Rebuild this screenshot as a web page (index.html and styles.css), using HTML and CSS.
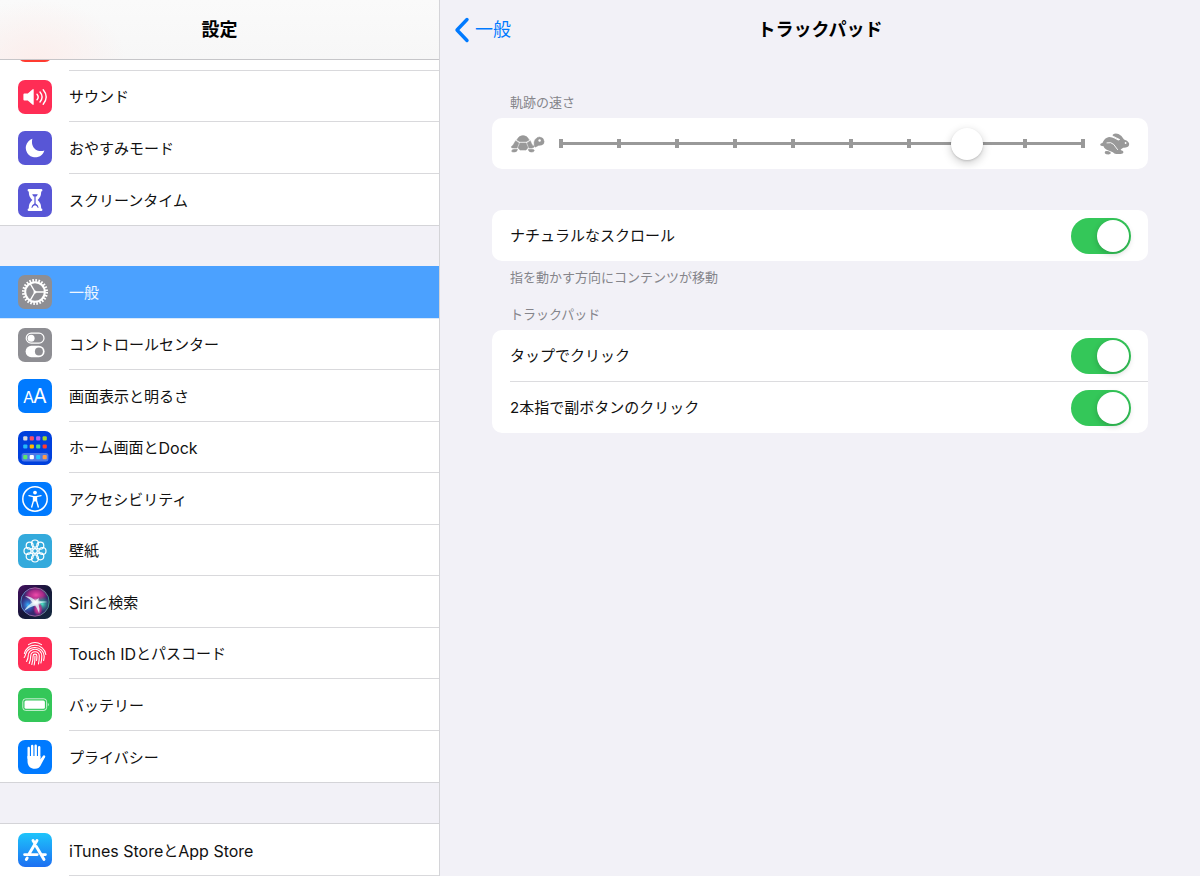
FILE: index.html
```html
<!DOCTYPE html>
<html lang="ja">
<head>
<meta charset="utf-8">
<meta name="viewport" content="width=device-width, initial-scale=1">
<title>設定</title>
<link rel="stylesheet" href="styles.css">
</head>
<body>
<div class="app">
  <aside class="sidebar">
    <header class="bar bar-sidebar"><h1 class="title">設定</h1></header>
    <nav class="menu">
      <ul class="group group-first">
        <li class="row row-peek" aria-hidden="true">
          <svg class="icon" viewBox="0 0 34 34"><rect width="34" height="34" rx="7" fill="#ff3b30"/></svg>
          <span class="row-body"></span>
        </li>
        <li><a class="row" href="#sound">
          <svg class="icon" viewBox="0 0 34 34"><rect width="34" height="34" rx="7" fill="#ff2d55"/><path d="M6.4 13.6h3.4l4.6-4.2q1.3-.8 1.3.6v14q0 1.400-1.300.6l-4.600-4.200H6.400q-1 0-1-1v-4.800q0-1 1-1z" fill="#fff"/><path d="M19 14.200q2.400 2.800 0 5.600M22 12q4.200 5 0 10M25.200 9.800q6 7.200 0 14.400" fill="none" stroke="#fff" stroke-width="1.400" stroke-linecap="round"/></svg>
          <span class="row-body">サウンド</span></a></li>
        <li><a class="row" href="#dnd">
          <svg class="icon" viewBox="0 0 34 34"><rect width="34" height="34" rx="7" fill="#5856d6"/><path d="M14.400 7.800C12.200 15.500 18.500 22 26.400 19.500A9.500 9.500 0 1 1 14.400 7.800z" fill="#fff"/></svg>
          <span class="row-body">おやすみモード</span></a></li>
        <li><a class="row" href="#screentime">
          <svg class="icon" viewBox="0 0 34 34"><rect width="34" height="34" rx="7" fill="#5856d6"/><path d="M10.800 6h12.400q1.200 0 1.200 1.200T23.200 8.500c0 4.500-1.500 6.500-3.600 8.500 2.100 2 3.600 4 3.600 8.500q1.200 0 1.200 1.300T23.200 28H10.800q-1.200 0-1.200-1.200t1.200-1.300c0-4.500 1.500-6.500 3.600-8.500-2.100-2-3.600-4-3.600-8.500q-1.200 0-1.200-1.300T10.800 6z" fill="#fff"/><path d="M14.200 11.200h5.600q-.5 1.400-1.400 2.400h-2.800q-.9-1-1.400-2.400zM16.400 13.400h1.200v7.200q2.700 1.500 3.100 4.200h-7.400q.4-2.700 3.100-4.200z" fill="#5856d6"/><path d="M14.300 25q.4-2.200 2.700-2.800 2.300.6 2.700 2.800z" fill="#fff"/></svg>
          <span class="row-body">スクリーンタイム</span></a></li>
      </ul>

      <ul class="group group-main">
        <li><a class="row row-selected" href="#general" aria-current="page">
          <svg class="icon" viewBox="0 0 34 34"><rect width="34" height="34" rx="7" fill="#8e8e93"/><g fill="none" stroke="#fff"><circle cx="17" cy="17" r="11.600" stroke-width="2.800" stroke-dasharray="1.600 1.437"/><circle cx="17" cy="17" r="9.800" stroke-width="2"/><path d="M17 17h9.500M17 17l-4.800-8.300M17 17l-4.800 8.300" stroke-width="1.400"/></g><circle cx="17" cy="17" r="1.500" fill="#fff"/></svg>
          <span class="row-body">一般</span></a></li>
        <li><a class="row" href="#control">
          <svg class="icon" viewBox="0 0 34 34"><rect width="34" height="34" rx="7" fill="#8e8e93"/><rect x="8.200" y="5.200" width="17.800" height="9.900" rx="4.950" fill="none" stroke="#fff" stroke-width="1.200"/><circle cx="13.100" cy="10.150" r="3.500" fill="#fff"/><rect x="7.600" y="17.800" width="19" height="11.400" rx="5.700" fill="#fff"/><circle cx="20.900" cy="23.500" r="4" fill="#8e8e93"/></svg>
          <span class="row-body">コントロールセンター</span></a></li>
        <li><a class="row" href="#display">
          <svg class="icon" viewBox="0 0 34 34"><rect width="34" height="34" rx="7" fill="#007aff"/><text class="icon-text" x="5" y="24" font-size="16">A</text><text class="icon-text" x="15" y="24" font-size="20">A</text></svg>
          <span class="row-body">画面表示と明るさ</span></a></li>
        <li><a class="row" href="#home">
          <svg class="icon" viewBox="0 0 34 34"><rect width="34" height="34" rx="7" fill="#0040dd"/><rect x="3.600" y="22" width="26.800" height="8.400" rx="2.500" fill="#4c79e8"/><rect x="5.200" y="5.200" width="4.200" height="4.200" rx="1" fill="#d9d9de"/><rect x="11.700" y="5.200" width="4.200" height="4.200" rx="1" fill="#ff4d63"/><rect x="18.100" y="5.200" width="4.200" height="4.200" rx="1" fill="#b565f5"/><rect x="24.600" y="5.200" width="4.200" height="4.200" rx="1" fill="#a5d92d"/><rect x="5.200" y="13.400" width="4.200" height="4.200" rx="1" fill="#24b7fa"/><rect x="11.700" y="13.400" width="4.200" height="4.200" rx="1" fill="#ffb800"/><rect x="18.100" y="13.400" width="4.200" height="4.200" rx="1" fill="#3ddc97"/><rect x="24.600" y="13.400" width="4.200" height="4.200" rx="1" fill="#ff3b30"/><rect x="5.200" y="24.100" width="4.200" height="4.200" rx="1" fill="#5ce66c"/><rect x="11.700" y="24.100" width="4.200" height="4.200" rx="1" fill="#fff"/><rect x="18.100" y="24.100" width="4.200" height="4.200" rx="1" fill="#24c5fa"/><rect x="24.600" y="24.100" width="4.200" height="4.200" rx="1" fill="#ff9a4a"/></svg>
          <span class="row-body">ホーム画面と<span class="latin">Dock</span></span></a></li>
        <li><a class="row" href="#accessibility">
          <svg class="icon" viewBox="0 0 34 34"><rect width="34" height="34" rx="7" fill="#007aff"/><circle cx="17" cy="17" r="12.200" fill="none" stroke="#fff" stroke-width="1.500"/><circle cx="17" cy="10.600" r="1.900" fill="#fff"/><path d="M11 13.600l4.500 1v4L13.700 25M23 13.600l-4.500 1v4L20.300 25" fill="none" stroke="#fff" stroke-width="1.400" stroke-linecap="round" stroke-linejoin="round"/><path d="M15 14h4v4.800l-.8.800h-2.400l-.8-.8z" fill="#fff"/></svg>
          <span class="row-body">アクセシビリティ</span></a></li>
        <li><a class="row" href="#wallpaper">
          <svg class="icon" viewBox="0 0 34 34"><rect width="34" height="34" rx="7" fill="#34aadc"/><g fill="none" stroke="#fff" stroke-width="1.200"><circle cx="17" cy="9.500" r="3.500"/><circle cx="22.300" cy="11.700" r="3.500"/><circle cx="24.500" cy="17" r="3.500"/><circle cx="22.300" cy="22.300" r="3.500"/><circle cx="17" cy="24.500" r="3.500"/><circle cx="11.700" cy="22.300" r="3.500"/><circle cx="9.500" cy="17" r="3.500"/><circle cx="11.700" cy="11.700" r="3.500"/><circle cx="17" cy="17" r="2.300"/><path d="M17 13v1.700M17 19.300V21M13 17h1.700M19.300 17H21M14.200 14.200l1.200 1.200M18.600 18.600l1.200 1.200M19.800 14.200l-1.200 1.200M15.400 18.600l-1.200 1.200"/></g></svg>
          <span class="row-body">壁紙</span></a></li>
        <li><a class="row" href="#siri">
          <svg class="icon" viewBox="0 0 34 34"><defs><linearGradient id="siriBg" x2="1" y2="1"><stop stop-color="#44105f"/><stop offset=".5" stop-color="#151638"/><stop offset="1" stop-color="#142a40"/></linearGradient><linearGradient id="siriRing" x2="1"><stop stop-color="#54c0f0"/><stop offset=".5" stop-color="#e573b5"/><stop offset="1" stop-color="#41c99f"/></linearGradient><radialGradient id="siriPink"><stop stop-color="#f04cab"/><stop offset=".6" stop-color="#c32b8d" stop-opacity=".8"/><stop offset="1" stop-color="#a01c86" stop-opacity="0"/></radialGradient><radialGradient id="siriBlue"><stop stop-color="#38b4ff"/><stop offset="1" stop-color="#2458d8" stop-opacity="0"/></radialGradient><radialGradient id="siriGreen"><stop stop-color="#4ff0cc"/><stop offset="1" stop-color="#159c80" stop-opacity="0"/></radialGradient><radialGradient id="siriCore"><stop stop-color="#fff"/><stop offset=".35" stop-color="#fff" stop-opacity=".8"/><stop offset="1" stop-color="#fff" stop-opacity="0"/></radialGradient></defs><rect width="34" height="34" rx="7" fill="url(#siriBg)"/><circle cx="17" cy="17" r="14.200" fill="#35296e"/><ellipse cx="18" cy="10" rx="12" ry="8" fill="url(#siriPink)"/><ellipse cx="10" cy="20" rx="8" ry="9" fill="url(#siriBlue)"/><ellipse cx="24" cy="19" rx="8" ry="8" fill="url(#siriGreen)"/><ellipse cx="20" cy="24" rx="5" ry="7" fill="url(#siriPink)"/><path d="M7 11q7 .5 10.500 5 1-1.800 3.500-3-.8 2-.6 3.300 5-.5 9 .7-5.500.4-9 1.800 1.600 5 .8 9.700-2-5-4-8-5.500 1-11.200 5.500 3.500-6 8.500-8.500Q11 13 7 11z" fill="#dffaff" opacity=".8"/><ellipse cx="17.500" cy="17.400" rx="6" ry="4.500" fill="url(#siriCore)"/><circle cx="17" cy="17" r="14.200" fill="none" stroke="url(#siriRing)" stroke-width=".8" opacity=".85"/></svg>
          <span class="row-body"><span class="latin">Siri</span>と検索</span></a></li>
        <li><a class="row" href="#touchid">
          <svg class="icon" viewBox="0 0 34 34"><rect width="34" height="34" rx="7" fill="#ff2d55"/><g fill="none" stroke="#fff" stroke-width="1.100" stroke-linecap="round"><path d="M10.500 7.600a12 12 0 0 1 13 0"/><path d="M6.400 16.500A10.800 10.800 0 0 1 17 8.200a10.800 10.800 0 0 1 10.800 9.300"/><path d="M6.200 20.500q1-1.300 1.300-3A9.300 9.300 0 0 1 17 10.500a9.200 9.200 0 0 1 9.200 8.500q0 2.500-.6 4.500"/><path d="M8.600 24.500q1.600-3 1.600-5.500a6.800 6.800 0 0 1 13.600 0q0 4-.9 7"/><path d="M11.200 26.500q1.500-4 1.500-7.500a4.300 4.300 0 0 1 8.600 0q0 4-.8 8"/><path d="M13.800 27.500q1.300-4.500 1.300-8.500a1.900 1.900 0 0 1 3.800 0q0 2.500-.3 4.500"/><path d="M17 19q0 5-.8 9"/></g></svg>
          <span class="row-body"><span class="latin">Touch ID</span>とパスコード</span></a></li>
        <li><a class="row" href="#battery">
          <svg class="icon" viewBox="0 0 34 34"><rect width="34" height="34" rx="7" fill="#34c759"/><rect x="4.800" y="10.800" width="23.800" height="11.600" rx="2.800" fill="none" stroke="#fff" stroke-width="1" opacity=".75"/><rect x="6.500" y="12.400" width="20.400" height="8.400" rx="1.500" fill="#fff"/><path d="M29.800 14.800q2 1.800 0 3.600z" fill="#fff" opacity=".75"/></svg>
          <span class="row-body">バッテリー</span></a></li>
        <li><a class="row" href="#privacy">
          <svg class="icon" viewBox="0 0 34 34"><rect width="34" height="34" rx="7" fill="#007aff"/><g fill="none" stroke="#fff" stroke-width="2.400" stroke-linecap="round"><path d="M10.700 18V8M14.200 18V6M17.700 18V5.800M21.200 18V7.200M22.300 21.500l3.700-5"/></g><path d="M9.500 16h12.900v3.500l4.600-3.500q.4.500-.2 1.500l-3.400 6.400q-2 4.900-6.400 4.900c-5 0-7.500-3-7.500-8z" fill="#fff"/></svg>
          <span class="row-body">プライバシー</span></a></li>
      </ul>

      <ul class="group">
        <li><a class="row" href="#store">
          <svg class="icon" viewBox="0 0 34 34"><defs><linearGradient id="store" x2="0" y2="1"><stop stop-color="#1ec4fb"/><stop offset="1" stop-color="#1d6ff2"/></linearGradient></defs><rect width="34" height="34" rx="7" fill="url(#store)"/><g fill="none" stroke="#fff" stroke-width="2.900" stroke-linecap="round"><path d="M19 7.600l-7.800 13.200M15 7.600l1.500 2.500M18.300 13.400l7.700 13.200M6.600 21.600h12.600M24 21.600h3.400M9.200 25l-.9 1.500"/></g></svg>
          <span class="row-body"><span class="latin">iTunes Store</span>と<span class="latin">App Store</span></span></a></li>
        <li class="row-next" aria-hidden="true"></li>
      </ul>
    </nav>
  </aside>

  <main class="detail">
    <header class="bar bar-detail">
      <a class="back" href="#general">
        <svg class="chevron" viewBox="0 0 16 26"><path d="M13 2.500L3 13l10 10.500" fill="none" stroke="#007aff" stroke-width="3.400" stroke-linecap="round" stroke-linejoin="round"/></svg>一般</a>
      <h2 class="title">トラックパッド</h2>
    </header>
    <form class="content">
      <section class="section">
        <label class="caption" for="speed">軌跡の速さ</label>
        <div class="card speed">
          <svg class="turtle" viewBox="0 0 35 18" fill="#999" stroke="#999" stroke-width=".5" stroke-linejoin="round"><path d="M6.800 4.900Q9 .6 13 .6t6.200 4.300L16.300 6.800H9.700z"/><path d="M5.700 5.700L8.900 7.900 7 12.900H2.600Q1 13 1.400 11.500 3.200 10.500 4 8.500z"/><path d="M9.900 8h6.200l1.900 4.700-2 2.400h-6l-2-2.400z"/><path d="M20.300 5.700L17.100 7.900l1.900 5h3q2.200 0 2.100-1.700-1.900-.6-2.600-2.800z"/><path d="M1.600 16q.5-1.800 2.800-1.800h3.100q-.3 2.800-3.300 2.900Q1.300 17.200 1.600 16zM18.300 14.200h3.600q2.700.2 2.300 1.800-.4 1.100-3 1.100-2.700-.2-2.900-2.900z"/><path d="M24.200 10.500q-.6-4.100 1-6 1.600-2.500 4.300-2.500 4.300.4 4.600 4.500 0 3-2.500 3.500l-3.200.5-2.800 1.500q-1 .1-1.400-1.500z"/><circle cx="29.600" cy="5.500" r="1.200" fill="#fff" stroke="none"/></svg>
          <div class="slider">
            <div class="ticks" aria-hidden="true"><i class="tick"></i><i class="tick"></i><i class="tick"></i><i class="tick"></i><i class="tick"></i><i class="tick"></i><i class="tick"></i><i class="tick"></i><i class="tick"></i><i class="tick"></i></div>
            <input class="range" id="speed" type="range" min="0" max="9" value="7">
          </div>
          <svg class="rabbit" viewBox="0 0 30 22"><path d="M13 1.600Q15-.3 18.500 1q3.500 1.500 5.500 5.600 3.500.7 5 3.400.7 2.800-1.600 4-2 .9-4.200.7l-2.200 1.500q-.6.700.2 1 2.300.3 2.300 2-.2 1.800-3 1.800h-4.300q-2-.2-3.300-1.800l-4.400-1.700Q4.500 16.300 3.600 13.300 0 13.300.2 11.400.4 10 2.400 9.900 4.600 4.600 9 3.900q3-.1 5.600 1.600l3.700 2 2-.8Q15 5 13 3.200 12.400 2.300 13 1.600z" fill="#999"/><path d="M5.200 18.300q2.700-.8 5.300 1 .9 1.700-1.700 2.100-3 0-3.800-1-.6-1.100.2-2.100z" fill="#999"/><path d="M6.600 9.900q4.600-1.200 7.200 1.600 1.600 2.300 4 5.400M13.200 3.300q3.400 1.700 6.600 3.300" fill="none" stroke="#fff" stroke-width=".9"/><circle cx="25.600" cy="10" r=".9" fill="#fff"/></svg>
        </div>
      </section>

      <section class="section section-scroll">
        <div class="card">
          <label class="option"><span class="option-body">ナチュラルなスクロール<input class="switch" type="checkbox" role="switch" checked></span></label>
        </div>
        <p class="note">指を動かす方向にコンテンツが移動</p>
      </section>

      <section class="section section-pad">
        <h3 class="caption">トラックパッド</h3>
        <div class="card">
          <label class="option"><span class="option-body">タップでクリック<input class="switch" type="checkbox" role="switch" checked></span></label>
          <label class="option"><span class="option-body">2本指で副ボタンのクリック<input class="switch" type="checkbox" role="switch" checked></span></label>
        </div>
      </section>
    </form>
  </main>
</div>
</body>
</html>
```
FILE: styles.css
```css
* { box-sizing: border-box; }

body {
  margin: 0;
  background: #f2f1f7;
  color: #111;
  font: 15px/20px Inter, "Noto Sans CJK JP", sans-serif;
}

a { color: inherit; text-decoration: none; }
ul { margin: 0; padding: 0; list-style: none; }

.app {
  display: grid;
  grid-template-columns: 11fr 19fr;
  height: 100vh;
}

/* Title bars */
.bar { display: grid; align-items: center; height: 60px; flex: none; }
.title { margin: 0; font-size: 18px; line-height: 24px; font-weight: 700; text-align: center; color: #000; }
.bar-sidebar {
  border-bottom: 1px solid #c6c6c9;
  background: radial-gradient(ellipse 90px 60px at 36px 60px, #fceeec, #f9f9f900), linear-gradient(#fafafa, #f7f7f7);
}
.bar-detail { grid-template-columns: 1fr auto 1fr; padding: 0 14px; }
.back { display: flex; align-items: center; gap: 5px; font-size: 18px; line-height: 24px; color: #007aff; }
.chevron { width: 16px; height: 26px; }

/* Sidebar */
.sidebar {
  display: flex;
  flex-direction: column;
  min-height: 0;
  border-right: 1px solid #d4d4d8;
  overflow: hidden;
}
.menu { display: flex; flex-direction: column; gap: 40px; flex: 1; min-height: 0; overflow: hidden; }
.group { flex: none; border: solid #d4d4d8; border-width: 1px 0; background: #fff; }
.group-first, .group-main { border-top: 0; }

.row { display: flex; align-items: center; gap: 17px; height: 52px; padding-left: 18px; }
li:nth-child(even) > .row { height: 51px; }
.row-body {
  display: flex;
  align-items: center;
  align-self: stretch;
  flex: 1;
  padding-top: 2px;
  border-bottom: 1px solid #d9d9dc;
}
.group-first li:last-child .row-body, .group-main li:last-child .row-body { border-bottom: 0; }
.latin { font-size: 16px; }
.icon { width: 34px; height: 34px; flex: none; }
.icon-text { fill: #fff; font-family: Inter, sans-serif; }

.row-peek { height: 11px; align-items: flex-end; overflow: hidden; }
.row-peek .icon { margin-bottom: 9px; }
.row-next { height: 10px; }

.row-selected {
  height: 53px;
  border-bottom: 1px solid #d9e9fb;
  background: #4ba1ff;
  background-clip: padding-box;
  color: #f0f7ff;
}
.row-selected .row-body { border-bottom: 0; }

/* Detail pane */
.content { padding: 32px 52px; }
.section { display: flex; flex-direction: column; }
.section-scroll { margin-top: 41px; }
.section-pad { margin-top: 17px; }
.caption, .note { margin: 0; padding: 0 18px; font-size: 13px; line-height: 20px; font-weight: 400; color: #85858b; }
.caption { margin-bottom: 6px; }
.note { margin-top: 6px; }
.card { border-radius: 10px; background: #fff; overflow: hidden; }

.option { display: flex; padding-left: 18px; }
.option-body {
  display: flex;
  align-items: center;
  justify-content: space-between;
  flex: 1;
  min-height: 51px;
  padding-right: 17px;
}
.option:not(:last-child) .option-body { min-height: 52px; border-bottom: 1px solid #dcdcdf; }

.switch {
  appearance: none;
  width: 60px;
  height: 36px;
  margin: 0;
  padding: 2px;
  border-radius: 18px;
  background: #dddde0;
}
.switch::before {
  content: "";
  display: block;
  width: 32px;
  height: 32px;
  border-radius: 50%;
  background: #fff;
  box-shadow: 0 2px 6px #0003;
}
.switch:checked { background: #34c759; }
.switch:checked::before { margin-left: auto; }

/* Tracking speed */
.speed { display: flex; align-items: center; min-height: 51px; padding: 0 18px; }
.turtle { width: 35px; height: 18px; flex: none; }
.rabbit { width: 30px; height: 22px; flex: none; }
.slider { display: grid; align-items: center; flex: 1; margin-right: 1px; }
.ticks, .range { grid-area: 1 / 1; }
.ticks {
  display: flex;
  justify-content: space-between;
  margin: 0 14px;
  background: linear-gradient(#999, #999) center / 100% 3px no-repeat;
}
.tick { width: 4px; height: 9px; background: #999; }
.range { appearance: none; width: 100%; height: 32px; margin: 0; background: none; }
.range::-webkit-slider-thumb {
  appearance: none;
  width: 32px;
  height: 32px;
  border-radius: 50%;
  background: #fff;
  box-shadow: 0 3px 10px #0003, 0 1px 2px #0002;
}
```
